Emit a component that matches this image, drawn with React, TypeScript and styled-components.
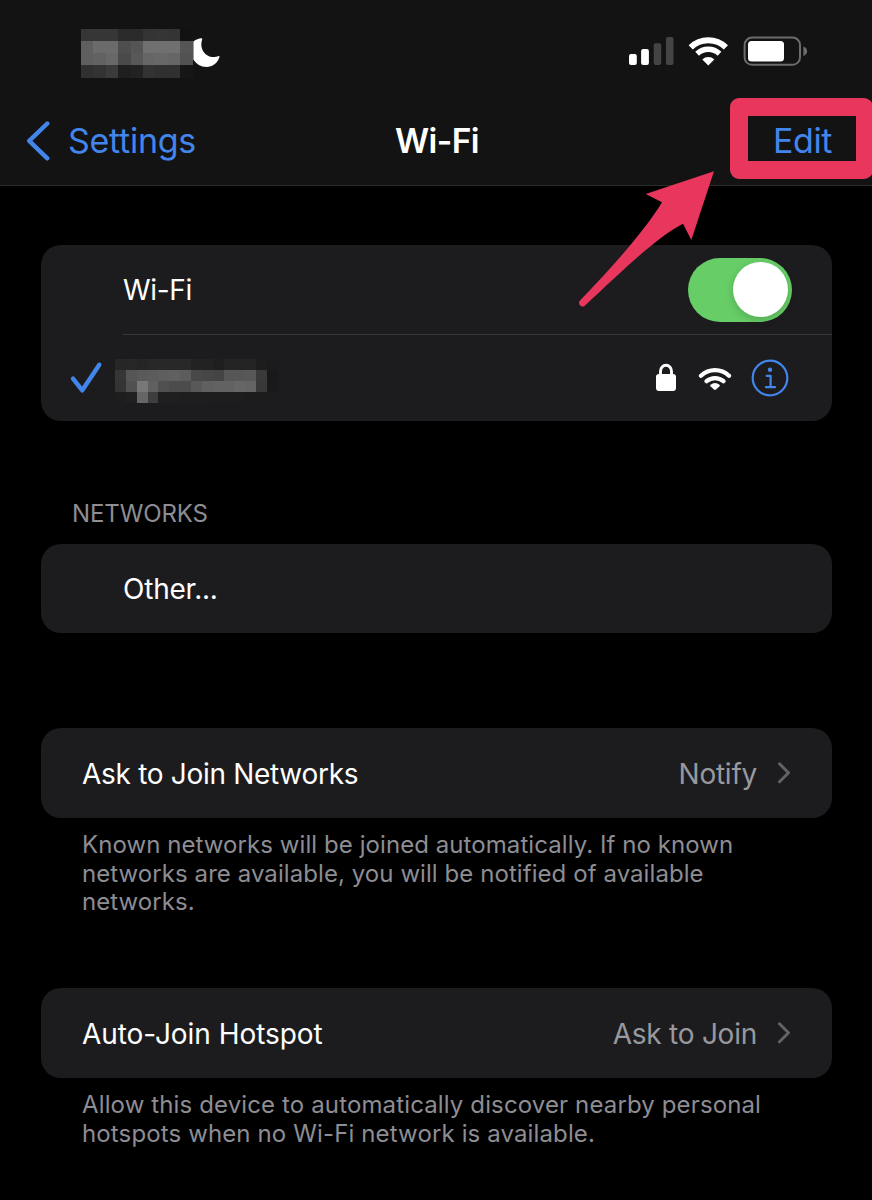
import React from 'react';
import styled, { createGlobalStyle } from 'styled-components';

const GlobalStyle = createGlobalStyle`
  *, *::before, *::after { box-sizing: border-box; }
  body { margin: 0; background: #000; }
`;

const Screen = styled.div`
  position: relative;
  width: 872px;
  height: 1200px;
  overflow: hidden;
  background: #000;
  color: #fff;
  font-family: Inter, 'Liberation Sans', sans-serif;
`;

const Header = styled.header`
  height: 186px;
  background: #131313;
  border-bottom: 1px solid #2a2a2b;
`;

const StatusBar = styled.div`
  display: flex;
  justify-content: space-between;
  height: 97px;
  padding: 29px 63px 0 81px;
`;

const StatusLeft = styled.div`
  display: flex;
`;

const StatusRight = styled.div`
  display: flex;
  align-items: flex-start;
  padding-top: 7px;
`;

const Mosaic = styled.div<{ $cols: number; $cell: number; $row: number; $top: number }>`
  display: grid;
  flex: none;
  margin-top: ${p => p.$top}px;
  grid-template-columns: repeat(${p => p.$cols}, ${p => p.$cell}px);
  grid-auto-rows: ${p => p.$row}px;
`;

const Tile = styled.span<{ $shade: string }>`
  background: #${p => p.$shade}${p => p.$shade}${p => p.$shade};
`;

const Icon = styled.svg<{ $left?: number; $right?: number; $top?: number }>`
  display: block;
  flex: none;
  margin-left: ${p => p.$left ?? 0}px;
  margin-right: ${p => p.$right ?? 0}px;
  margin-top: ${p => p.$top ?? 0}px;
`;

const NavBar = styled.nav`
  display: grid;
  grid-template-columns: 1fr auto 1fr;
  align-items: center;
  height: 88px;
  padding: 0 24px 0 26px;
`;

const NavLink = styled.a<{ $end?: boolean }>`
  display: flex;
  align-items: center;
  justify-self: ${p => (p.$end ? 'end' : 'start')};
  margin-right: ${p => (p.$end ? 16 : 0)}px;
  color: #4285eb;
  font-size: 34px;
  line-height: 40px;
  letter-spacing: ${p => (p.$end ? -0.4 : -0.28)}px;
`;

const Title = styled.h1`
  margin: 0;
  font-size: 33.5px;
  line-height: 40px;
  font-weight: 600;
  letter-spacing: -0.6px;
`;

const Content = styled.main`
  display: flex;
  flex-direction: column;
  padding: 59px 40px 0 41px;
`;

const Card = styled.section`
  border-radius: 20px;
  background: #1c1c1e;
`;

const Row = styled.div<{ $indent: number; $height?: number }>`
  display: flex;
  align-items: center;
  height: ${p => p.$height ?? 89}px;
  padding: 0 40px 0 ${p => p.$indent}px;
`;

const Divider = styled.div`
  height: 1px;
  margin-left: 82px;
  background: #38383a;
`;

const Label = styled.span<{ $spacing?: number; $drop?: number }>`
  flex: 1;
  padding-top: ${p => p.$drop ?? 1}px;
  font-size: 28px;
  line-height: 34px;
  letter-spacing: ${p => p.$spacing ?? 0}px;
`;

const Value = styled.span<{ $spacing?: number }>`
  margin-right: 19px;
  padding-top: 2px;
  color: #98989f;
  font-size: 28px;
  line-height: 34px;
  letter-spacing: ${p => p.$spacing ?? 0}px;
`;

const Spacer = styled.div`
  flex: 1;
`;

const SectionTitle = styled.h2`
  margin: 78px 0 0 31px;
  height: 45px;
  color: #8d8d93;
  font-size: 24px;
  line-height: 29px;
  font-weight: 400;
  letter-spacing: -0.12px;
`;

const Footnote = styled.p<{ $height: number; $spacing: number }>`
  margin: 0;
  height: ${p => p.$height}px;
  padding: 13px 0 0 41px;
  color: #8d8d93;
  font-size: 24px;
  line-height: 28.5px;
  letter-spacing: ${p => p.$spacing}px;
  white-space: nowrap;
`;

const Gap = styled.div`
  height: 95px;
`;

const Toggle = styled.div`
  display: flex;
  justify-content: flex-end;
  align-items: center;
  width: 104.5px;
  height: 64px;
  padding-right: 4px;
  border-radius: 32px;
  background: #67ce67;
`;

const Knob = styled.div`
  width: 55.5px;
  height: 55.5px;
  border-radius: 50%;
  background: #fff;
  box-shadow: 0 3px 8px rgba(0, 0, 0, 0.18);
`;

const Highlight = styled.div`
  position: absolute;
  left: 730px;
  top: 98px;
  width: 143px;
  height: 81px;
  border: 18px solid #e8365d;
  border-right-width: 17px;
  border-radius: 9px;
`;

const Pointer = styled.svg`
  position: absolute;
  left: 572px;
  top: 164px;
`;

const clock = [
  '36 36 36 2b 2b 34 35 34 12',
  '5f 6b 6b 4e 55 70 70 70 55',
  '5f 62 68 4a 58 66 68 66 52',
  '30 33 3a 1f 22 33 30 30 16',
];

const network = [
  '26 27 25 28 28 28 28 22 22 1f 24 24 24 1d 1b',
  '36 56 5a 5c 5e 60 5c 48 46 44 56 56 58 3a 19',
  '34 50 78 60 50 4c 4c 58 60 62 62 66 64 38 19',
  '1d 20 66 3e 1f 1f 1e 1e 1d 1d 1d 1d 1c 1c 1c',
];

function Redacted({ rows, cell, row, top = 0 }: { rows: string[]; cell: number; row: number; top?: number }) {
  const tiles = rows.flatMap(r => r.split(' '));
  return (
    <Mosaic $cols={rows[0].split(' ').length} $cell={cell} $row={row} $top={top}>
      {tiles.map((shade, i) => (
        <Tile key={i} $shade={shade} />
      ))}
    </Mosaic>
  );
}

function Chevron() {
  return (
    <Icon $right={2} width="14" height="24" viewBox="0 0 14 24" fill="none">
      <path d="M3.500 2.800 12.500 11.800 3.500 20.800" stroke="#636366" strokeWidth="3" strokeLinecap="round" strokeLinejoin="round" />
    </Icon>
  );
}

export default function App() {
  return (
    <Screen>
      <GlobalStyle />
      <Header>
        <StatusBar>
          <StatusLeft>
            <Redacted rows={clock} cell={12.4} row={12.15} />
            <Icon $top={9} width="28" height="30" viewBox="0 0 28 30">
              <path d="M0.4 3.4C3 1.6 6 .3 8.2.3c.9 0 1.2.6.9 1.4C6.2 10.500 12 19 20.500 19c1.700 0 3.500-.3 4.700-.8.900-.3 1.500.2 1.200 1.100C24.500 25.200 19.500 29 13.500 29 8 29 3 26 .4 21.500Z" fill="#fff" />
            </Icon>
          </StatusLeft>
          <StatusRight>
            <Icon width="46" height="30" viewBox="0 0 46 30">
              <rect x="1" y="18" width="7.800" height="11" rx="2" fill="#fff" />
              <rect x="13.100" y="13" width="7.800" height="16" rx="2" fill="#fff" />
              <rect x="25.700" y="7.300" width="7.500" height="21.700" rx="2" fill="#444" />
              <rect x="38" y="1" width="7.500" height="28" rx="2" fill="#444" />
            </Icon>
            <Icon $left={14} width="41" height="31" viewBox="0 0 41 31" fill="none">
              <path d="M2.700 11.300A25.300 25.300 0 0 1 37.900 11.300" stroke="#fff" strokeWidth="6" />
              <path d="M9.100 17.700A16.200 16.200 0 0 1 31.500 17.700" stroke="#fff" strokeWidth="5.400" />
              <path d="M20.300 29.400 14.300 23.400A8.700 8.700 0 0 1 26.300 23.400Z" fill="#fff" />
            </Icon>
            <Icon $left={14} width="66" height="31" viewBox="0 0 66 31" fill="none">
              <rect x="1.600" y="1.600" width="55.400" height="27.200" rx="7.500" stroke="#6c6c6c" strokeWidth="2" />
              <rect x="5" y="5" width="36" height="20.400" rx="3.500" fill="#fff" />
              <path d="M60.400 10.500c2.300.8 3.700 2.600 3.700 4.700s-1.400 3.900-3.700 4.700Z" fill="#6c6c6c" />
            </Icon>
          </StatusRight>
        </StatusBar>
        <NavBar>
          <NavLink>
            <Icon width="42" height="40" viewBox="0 0 42 40" fill="none">
              <path d="M21.300 2.500 3.200 19.800 21.300 37.300" stroke="#4285eb" strokeWidth="4.400" strokeLinecap="round" strokeLinejoin="round" />
            </Icon>
            Settings
          </NavLink>
          <Title>Wi-Fi</Title>
          <NavLink $end>Edit</NavLink>
        </NavBar>
      </Header>

      <Content>
        <Card>
          <Row $indent={82}>
            <Label $spacing={-0.3}>Wi-Fi</Label>
            <Toggle>
              <Knob />
            </Toggle>
          </Row>
          <Divider />
          <Row $indent={28} $height={86}>
            <Icon width="46" height="40" viewBox="0 0 46 40" fill="none">
              <path d="M4 20.700 13.300 32.300 30.300 6.700" stroke="#4285eb" strokeWidth="4.400" strokeLinecap="round" strokeLinejoin="round" />
            </Icon>
            <Redacted rows={network} cell={10.87} row={11.2} top={6} />
            <Spacer />
            <Icon $top={-2} width="22" height="30" viewBox="0 0 22 30" fill="none">
              <rect x="1" y="12" width="20" height="17" rx="3" fill="#fff" />
              <path d="M5.500 14V9.200a5.500 5.900 0 0 1 11 0V14" stroke="#fff" strokeWidth="2.900" />
            </Icon>
            <Icon $left={21} $top={-1} width="34" height="28" viewBox="0 0 34 28" fill="none">
              <path d="M3 11.700A20.300 20.300 0 0 1 31 11.700M8.600 17.200A13 13 0 0 1 25.400 17.200" stroke="#fff" strokeWidth="4.300" strokeLinecap="round" />
              <path d="M12.500 20.800Q17 17.200 21.500 20.800 22.300 21.500 21.500 22.300L18 25.600Q17 26.500 16 25.600L12.500 22.300Q11.700 21.500 12.500 20.800Z" fill="#fff" />
            </Icon>
            <Icon $left={18} $right={2} $top={-1} width="40" height="40" viewBox="0 0 40 40" fill="none">
              <circle cx="20" cy="20" r="17.300" stroke="#4285eb" strokeWidth="2.200" />
              <circle cx="20" cy="11.700" r="2.200" fill="#4285eb" />
              <path d="M16.600 17.800H20.600V29.200M15.900 29.200H25" stroke="#4285eb" strokeWidth="2.200" strokeLinecap="round" strokeLinejoin="round" />
            </Icon>
          </Row>
        </Card>

        <SectionTitle>NETWORKS</SectionTitle>
        <Card>
          <Row $indent={82}>
            <Label $spacing={-0.22}>Other...</Label>
          </Row>
        </Card>

        <Gap />
        <Card>
          <Row $indent={41} $height={90}>
            <Label $spacing={-0.3} $drop={2}>Ask to Join Networks</Label>
            <Value $spacing={-0.25}>Notify</Value>
            <Chevron />
          </Row>
        </Card>
        <Footnote $height={170} $spacing={0.07}>
          Known networks will be joined automatically. If no known
          <br />
          networks are available, you will be notified of available
          <br />
          networks.
        </Footnote>

        <Card>
          <Row $indent={41} $height={90}>
            <Label $spacing={-0.05} $drop={2}>Auto-Join Hotspot</Label>
            <Value $spacing={-0.25}>Ask to Join</Value>
            <Chevron />
          </Row>
        </Card>
        <Footnote $height={120} $spacing={0.13}>
          Allow this device to automatically discover nearby personal
          <br />
          hotspots when no Wi-Fi network is available.
        </Footnote>
      </Content>

      <Highlight />
      <Pointer width="150" height="150" viewBox="572 164 150 150">
        <path d="M714 171.300 645.700 194 662 202.300C645 230 617 262 580 300.500A3.600 3.600 0 0 0 584.500 306C622 271 657 237 683 223.700L691.300 240Z" fill="#e8365d" />
      </Pointer>
    </Screen>
  );
}
